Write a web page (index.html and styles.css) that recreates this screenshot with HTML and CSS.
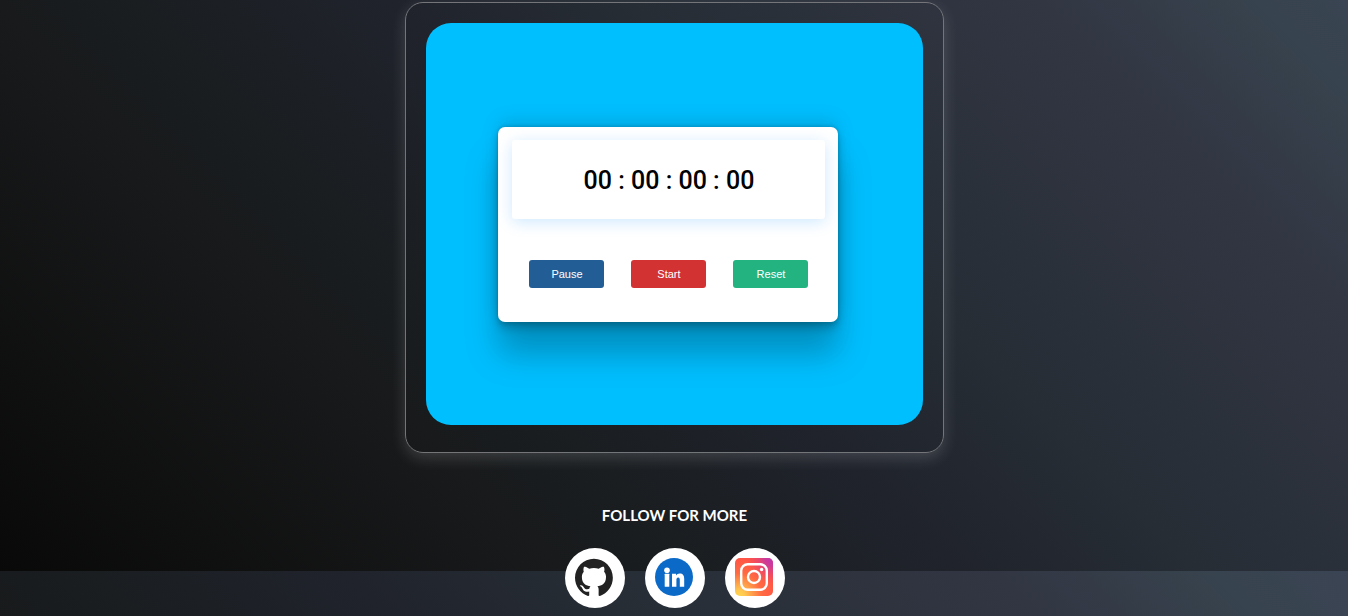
FILE: index.html
```html
<!DOCTYPE html>
<html lang="en">
<head>
<meta charset="utf-8">
<meta name="viewport" content="width=device-width, initial-scale=1">
<title>Stopwatch</title>
<link rel="stylesheet" href="styles.css">
</head>
<body>
<main class="panel">
  <section class="stage">
    <div class="stopwatch">
      <div class="display" role="timer">00 : 00 : 00 : 00</div>
      <div class="controls">
        <button class="btn btn-pause" type="button">Pause</button>
        <button class="btn btn-start" type="button">Start</button>
        <button class="btn btn-reset" type="button">Reset</button>
      </div>
    </div>
  </section>
</main>
<footer class="follow">
  <h2 class="follow-title">FOLLOW FOR MORE</h2>
  <nav class="social">
    <a class="social-link" href="#" aria-label="GitHub">
      <svg class="social-icon" viewBox="0 0 98 98"><path transform="translate(0 2)" fill="#222" d="M48.854 0C21.839 0 0 22 0 49.217c0 21.756 13.993 40.172 33.405 46.69 2.427.49 3.316-1.059 3.316-2.362 0-1.141-.08-5.052-.08-9.127-13.59 2.934-16.42-5.867-16.42-5.867-2.184-5.704-5.42-7.17-5.42-7.17-4.448-3.015.324-3.015.324-3.015 4.934.326 7.523 5.052 7.523 5.052 4.367 7.496 11.404 5.378 14.235 4.074.404-3.178 1.699-5.378 3.074-6.6-10.839-1.141-22.243-5.378-22.243-24.283 0-5.378 1.94-9.778 5.014-13.2-.485-1.222-2.184-6.275.486-13.038 0 0 4.125-1.304 13.426 5.052a46.97 46.97 0 0 1 12.214-1.63c4.125 0 8.33.571 12.213 1.63 9.302-6.356 13.427-5.052 13.427-5.052 2.67 6.763.97 11.816.485 13.038 3.155 3.422 5.015 7.822 5.015 13.2 0 18.905-11.404 23.06-22.324 24.283 1.78 1.548 3.316 4.481 3.316 9.126 0 6.6-.08 11.897-.08 13.526 0 1.304.89 2.853 3.316 2.364 19.412-6.52 33.405-24.935 33.405-46.691C97.707 22 75.788 0 48.854 0z"/></svg>
    </a>
    <a class="social-link" href="#" aria-label="LinkedIn">
      <svg class="social-icon" viewBox="0 0 38 38"><circle cx="19" cy="19" r="19" fill="#0b69c7"/><g fill="#fff"><circle cx="12" cy="12.2" r="2.8"/><rect x="9.7" y="15.8" width="4.6" height="12.9" rx=".5"/><path d="M17 15.8h4v1.7c.7-1.2 2-2 3.7-2 3.2 0 4.5 2 4.5 5.2v8h-4.4v-6.6c0-1.8-.4-2.7-1.6-2.7s-1.8 1-1.8 2.7v6.6H17z"/></g></svg>
    </a>
    <a class="social-link" href="#" aria-label="Instagram">
      <svg class="social-icon" viewBox="0 0 38 38">
        <defs>
          <radialGradient id="ig-warm" gradientUnits="userSpaceOnUse" cx="4" cy="38" r="38"><stop offset="0" stop-color="#ffd552"/><stop offset=".15" stop-color="#ffc84f"/><stop offset=".6" stop-color="#ff6a42"/><stop offset="1" stop-color="#ff5446"/></radialGradient>
          <radialGradient id="ig-cool" gradientUnits="userSpaceOnUse" cx="38" cy="0" r="27"><stop offset="0" stop-color="#b837b8"/><stop offset=".3" stop-color="#c937a0" stop-opacity=".9"/><stop offset="1" stop-color="#f04a60" stop-opacity="0"/></radialGradient>
        </defs>
        <rect width="38" height="38" rx="5" fill="url(#ig-warm)"/><rect width="38" height="38" rx="5" fill="url(#ig-cool)"/>
        <g fill="none" stroke="#fff" stroke-width="2.4"><rect x="6.2" y="6.2" width="25.6" height="25.6" rx="6.5"/><circle cx="19" cy="19" r="6"/></g><circle cx="26.6" cy="11.5" r="1.7" fill="#fff"/>
      </svg>
    </a>
  </nav>
</footer>
</body>
</html>
```
FILE: styles.css
```css
* {
  box-sizing: border-box;
}

body {
  margin: 0;
  padding: 2px 0 8px 1px;
  display: flex;
  flex-direction: column;
  align-items: center;
  background-color: #1b1f24;
  background-image: linear-gradient(45deg, #090909, #171819 25%, #1a1e21 36%, #20232c 49%, #262d35 61%, #323643 82%, #37434e 93%, #3b4454);
  background-size: 100% 100vh;
  background-position: 0 -45px;
  font-family: Lato, "Liberation Sans", sans-serif;
}

.panel {
  width: 40%;
  min-width: 400px;
  padding: 20px 20px 27px;
  border: 1px solid #747579;
  border-radius: 18px;
  box-shadow: 0 5px 15px rgba(255, 255, 255, 0.16);
}

.stage {
  display: flex;
  align-items: center;
  justify-content: center;
  padding: 104px 12px 103px 0;
  border-radius: 25px;
  background: #00bfff;
}

.stopwatch {
  width: 340px;
  padding: 13px 13px 34px 14px;
  border-radius: 7px;
  background: #fff;
  box-shadow:
    0 32px 33px rgba(0, 0, 0, 0.25),
    0 -7px 18px rgba(0, 0, 0, 0.12),
    0 2px 4px rgba(0, 0, 0, 0.12),
    0 7px 8px rgba(0, 0, 0, 0.17),
    0 -2px 3px rgba(0, 0, 0, 0.09);
}

.display {
  padding: 26px 0 23px;
  border-radius: 3px;
  background: #fff;
  box-shadow: 0 3px 16px rgba(0, 140, 255, 0.2);
  color: #000;
  font: 500 25px/30px Roboto, sans-serif;
  text-align: center;
}

.controls {
  display: flex;
  justify-content: center;
  gap: 27px;
  margin-top: 41px;
}

.btn {
  width: 75px;
  height: 28px;
  padding: 0;
  border: 0;
  border-radius: 3px;
  color: #fff;
  font: 11px/16px "Liberation Sans", Arial, sans-serif;
  cursor: pointer;
}

.btn-pause {
  background: #225e95;
}

.btn-start {
  background: #d33232;
}

.btn-reset {
  background: #22b381;
}

.follow {
  display: flex;
  flex-direction: column;
  align-items: center;
  gap: 21px;
  margin-top: 50px;
}

.follow-title {
  margin: 0;
  color: #fff;
  font-size: 15px;
  font-weight: 700;
  line-height: 24px;
}

.social {
  display: flex;
  gap: 20px;
}

.social-link {
  width: 60px;
  height: 60px;
  padding: 10px;
  border-radius: 50%;
  background: #fff;
}

.social-icon {
  display: block;
  width: 38px;
  height: 38px;
}
```
